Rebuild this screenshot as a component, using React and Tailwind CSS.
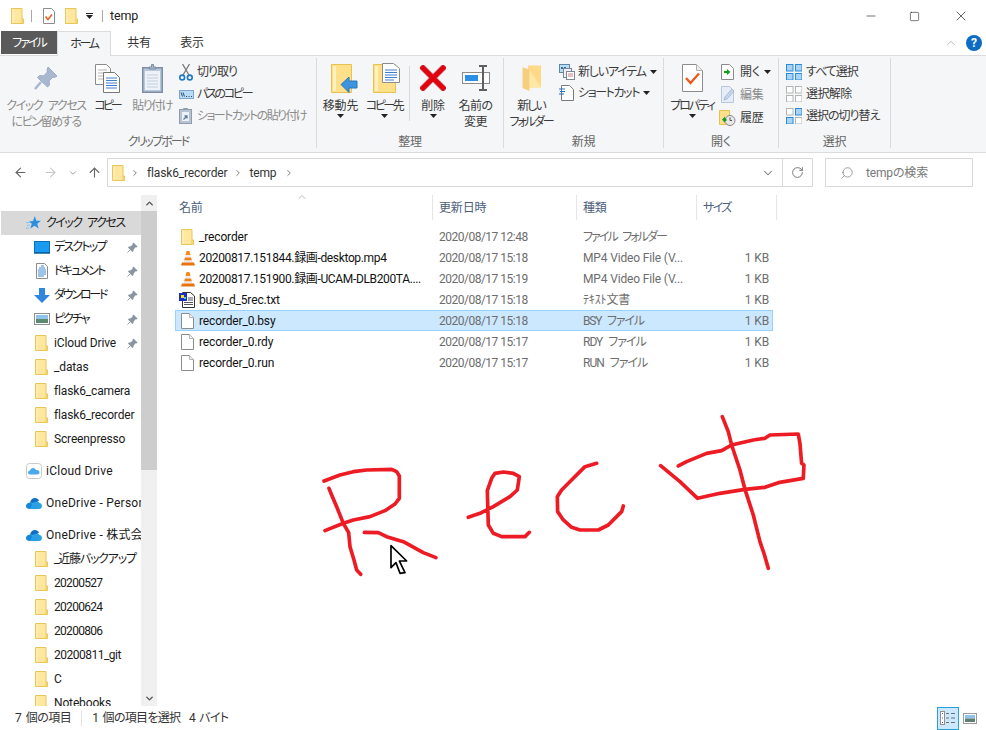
import React from 'react';
import { ArrowLeft, ArrowRight, ArrowUp, ChevronDown, ChevronRight, ChevronUp, RotateCw, Search, Minus, Square, X } from 'lucide-react';

const Caret = ({ className = '' }) => (
  <svg width="7" height="4" viewBox="0 0 7 4" className={className}>
    <path d="M0 0h7L3.5 4z" fill="#222" />
  </svg>
);

const Folder = ({ className = '' }) => (
  <svg width="13" height="16" viewBox="0 0 13 16" className={`shrink-0 ${className}`}>
    <path d="M.5.5h10.5v10.5h1.5v4.5H.5z" fill="#ffe79f" stroke="#eac656" />
    <path d="M11 11v4.5" stroke="#eac656" />
    <path d="M1.5 1.5h1v13h-1z" fill="#fff2c8" />
  </svg>
);

const FileIcon = ({ className = '' }) => (
  <svg width="13" height="16" viewBox="0 0 13 16" className={`shrink-0 ${className}`}>
    <path d="M.5.5h8l4 4v11H.5z" fill="#fff" stroke="#8c8c8c" />
    <path d="M8.5.5v4h4" fill="#f0f0f0" stroke="#b5b5b5" />
  </svg>
);

const VlcIcon = () => (
  <svg width="14" height="16" viewBox="0 0 14 16" className="shrink-0">
    <path d="M5.5 1h3l1 4h-5z" fill="#f58a1f" />
    <path d="M4.5 5h5l.6 2.5H3.9z" fill="#eee" />
    <path d="M3.9 7.5h6.2l.8 3H3.1z" fill="#f0811a" />
    <path d="M3.1 10.5h7.8l.4 2H2.7z" fill="#e9e9e9" />
    <path d="M1 12.5h12l1 3H0z" fill="#e9720c" />
  </svg>
);

const TxtIcon = () => (
  <svg width="16" height="16" viewBox="0 0 16 16" className="shrink-0 -ml-[2px]">
    <path d="M3.5.5h8l4 3.5v11.5h-12z" fill="#fff" stroke="#333" />
    <path d="M9 6h5M9 8h5M5 10.5h9M5 12.5h9" stroke="#555" />
    <rect x="0" y="1" width="8" height="8" fill="#1a2fc4" />
    <rect x="2" y="3" width="3" height="3" fill="#f5e31a" />
    <rect x="5" y="5" width="2" height="2" fill="#4bd0e8" />
  </svg>
);

const PinSmall = () => (
  <svg width="11" height="11" viewBox="0 0 12 12" className="shrink-0">
    <path d="M7 .5l4.5 4.5-1.2 1-.8-.3L7.4 7.8l-.3 2L5.9 11 1 6.1 2.2 4.9l2-.3 2.1-2.1-.3-.8z" fill="#8a95a3" />
    <path d="M3.5 8.5L.5 11.5" stroke="#8a95a3" />
  </svg>
);

const QuickStar = () => (
  <svg width="15" height="14" viewBox="0 0 16 15" className="shrink-0">
    <path d="M9.5 0l1.500 5 5 .2-4 3.100 1.500 5.200-4.300-3L4.500 13.500l1.700-5.100-3-2.400 4.300-.7z" fill="#2b8fe0" />
    <path d="M0 7h4M1 10h3M0 13h3" stroke="#7cbcf0" />
  </svg>
);

const DesktopIcon = () => (
  <svg width="16" height="13" viewBox="0 0 16 13" className="shrink-0">
    <rect x=".5" y=".5" width="15" height="11" fill="#1a9bf0" stroke="#0b6fc0" />
    <path d="M0 12h16" stroke="#0a5c9e" strokeWidth="1.5" />
  </svg>
);

const DocsIcon = () => (
  <svg width="12" height="16" viewBox="0 0 12 16" className="shrink-0">
    <path d="M.5.5h8l3 3v12H.5z" fill="#fff" stroke="#8c8c8c" />
    <path d="M5 3h3M3 5h6M2 7h8M2 9h8M2 11h8M2 13h6" stroke="#3c8ad0" />
  </svg>
);

const DownloadIcon = () => (
  <svg width="16" height="15" viewBox="0 0 16 15" className="shrink-0">
    <path d="M5 0h6v7h5l-8 8-8-8h5z" fill="#2f86dc" />
  </svg>
);

const PicturesIcon = () => (
  <svg width="16" height="12" viewBox="0 0 16 12" className="shrink-0">
    <rect x=".5" y=".5" width="15" height="11" fill="#fff" stroke="#8f8f8f" />
    <rect x="2" y="2" width="12" height="4" fill="#8cc4ec" />
    <rect x="2" y="6" width="12" height="4" fill="#5e8a72" />
  </svg>
);

const OneDriveIcon = () => (
  <svg width="16" height="11" viewBox="0 0 16 11" className="shrink-0">
    <path d="M4 4.500C4.500 2 6.500 0 9 0c1.800 0 3.200 1 4 2.500L9 6z" fill="#0f6fc4" />
    <path d="M3.500 11C1.500 11 0 9.800 0 8c0-1.800 1.500-3.300 3.700-3.500L8 6l2 5z" fill="#1487d8" />
    <path d="M6 6.500c.8-1.800 2.600-3 4.500-3 1.500 0 2.500.6 3 1.500 1.500.2 2.500 1.500 2.500 3s-1 3-3 3H4z" fill="#2a9fe6" />
  </svg>
);

const ICloudIcon = () => (
  <svg width="16" height="16" viewBox="0 0 16 16" className="shrink-0">
    <rect x=".5" y=".5" width="15" height="15" rx="3" fill="#fff" stroke="#c9c9c9" />
    <path d="M4 11.500C2.800 11.500 2 10.600 2 9.500 2 8.400 2.900 7.600 4 7.600 4.300 6 5.500 5 7 5c1.500 0 2.500.8 3 2 .3-.1.600-.1.900-.1 1.500 0 2.600 1 2.600 2.300 0 1.300-1.100 2.300-2.500 2.300z" fill="#4aa8ec" />
  </svg>
);

const PinLarge = () => (
  <svg width="24" height="25" viewBox="0 0 24 25">
    <path d="M14 1l9 9-2.500 1.500-1.500-.5-4 4 .5 4-2 2L3.500 11.500l2-2 4 .5 4-4-.5-1.500z" fill="#a9b8cf" stroke="#9aabc4" />
    <path d="M7 16L1 23" stroke="#a9b8cf" strokeWidth="2.500" />
  </svg>
);

const CopyLarge = () => (
  <svg width="25" height="29" viewBox="0 0 25 29">
    <path d="M.5.5h11l4 4v16H.5z" fill="#fff" stroke="#8c8c8c" />
    <path d="M3 6h9M3 9h9M3 12h9M3 15h9" stroke="#b5b5b5" />
    <path d="M8.5 8.5h11l5 5v15h-16z" fill="#fff" stroke="#777" />
    <path d="M11 14h11M11 16.500h11M11 19h11M11 21.500h11M11 24h11" stroke="#3f7fd0" />
  </svg>
);

const PasteLarge = () => (
  <svg width="21" height="29" viewBox="0 0 21 29">
    <rect x=".75" y="3.75" width="19.5" height="24.5" fill="#b8c8dc" stroke="#7d8da4" strokeWidth="1.5" />
    <rect x="3" y="7" width="15" height="19" fill="#eef2f8" />
    <path d="M5 11h11M5 14h11M5 17h11M5 20h11M5 23h11" stroke="#c3cedd" />
    <path d="M7 5V3h2.500V.5h2V3H14v2z" fill="#aab6c6" stroke="#7d8da4" />
  </svg>
);

const ScissorsIcon = () => (
  <svg width="14" height="17" viewBox="0 0 14 17">
    <path d="M4 11L10.500 0M10 11L3.500 0" stroke="#7a7a7a" strokeWidth="1.3" fill="none" />
    <circle cx="3.2" cy="13.5" r="2.4" fill="none" stroke="#1f78c8" strokeWidth="1.6" />
    <circle cx="10.8" cy="13.5" r="2.4" fill="none" stroke="#1f78c8" strokeWidth="1.6" />
  </svg>
);

const PathCopyIcon = () => (
  <svg width="15" height="9" viewBox="0 0 15 9">
    <rect x=".5" y=".5" width="14" height="8" fill="#b8dcf5" stroke="#7fa9cc" />
    <path d="M2 2.500l1.500 4M4 2.500l1.500 4M7 6.500h1M9.500 6.500h1M12 6.500h1" stroke="#334a66" />
  </svg>
);

const ShortcutPasteIcon = () => (
  <svg width="13" height="16" viewBox="0 0 13 16">
    <rect x=".5" y="1.5" width="12" height="14" fill="#b8c3d2" stroke="#8f9cad" />
    <rect x="3" y="4" width="7" height="9" fill="#eef1f6" />
    <path d="M4.500 1.500V.5h4v1" stroke="#8f9cad" fill="none" />
    <path d="M4.500 11.500l3-3M5.500 8h2.500v2.500" stroke="#5f7d9e" strokeWidth="1.3" fill="none" />
  </svg>
);

const MoveLarge = () => (
  <svg width="27" height="29" viewBox="0 0 27 29" className="translate-x-[4px]">
    <path d="M.5.5h20v28H.5z" fill="#ffe08a" stroke="#e8c14e" />
    <path d="M2 2h3v25H2z" fill="#fff0bd" />
    <path d="M10 20.500L18 13v4h8v7h-8v4.500z" fill="#3d93dd" stroke="#2a76bc" />
  </svg>
);

const CopyToLarge = () => (
  <svg width="27" height="30" viewBox="0 0 27 30" className="translate-x-[2px]">
    <path d="M.5 1.500h22v28H.5z" fill="#ffe08a" stroke="#e8c14e" />
    <path d="M2 3h3v25H2z" fill="#fff0bd" />
    <path d="M9.500.5h11l6 5v14h-17z" fill="#fff" stroke="#8c8c8c" />
    <path d="M12 7h12M12 9.500h12M12 12h12M12 14.500h12M12 17h9" stroke="#3f7fd0" />
  </svg>
);

const DeleteLarge = () => (
  <svg width="26" height="26" viewBox="0 0 26 26">
    <path d="M3 3l20 20M23 3L3 23" stroke="#8c3a3f" strokeWidth="6.5" strokeLinecap="square" opacity=".45" />
    <path d="M3 3l20 20M23 3L3 23" stroke="#e3000f" strokeWidth="5" strokeLinecap="square" />
  </svg>
);

const RenameLarge = () => (
  <svg width="28" height="26" viewBox="0 0 28 26">
    <rect x=".5" y="7.5" width="27" height="11" fill="#fff" stroke="#8c8c8c" />
    <rect x="3" y="10" width="13" height="6" fill="#2b8fe6" />
    <path d="M17 1h8M21 1v24M17 25h8" stroke="#5f5f5f" strokeWidth="2" fill="none" />
  </svg>
);

const NewFolderLarge = () => (
  <svg width="19" height="27" viewBox="0 0 19 27">
    <path d="M6 .5h13v22H6z" fill="#ffd987" />
    <path d="M.5 2l7 3v21l-7-3z" fill="#f6cf7e" />
    <path d="M7.500 5L19 22.500H7.500z" fill="#ffe7a8" />
  </svg>
);

const NewItemIcon = () => (
  <svg width="16" height="16" viewBox="0 0 16 16">
    <rect x=".5" y=".5" width="10" height="8" fill="#b8dcf5" stroke="#5d86a8" />
    <path d="M2 3h2v2H2zM5 3h2v2H5z" fill="#3a6c96" />
    <rect x="4.5" y="4.5" width="8" height="9" fill="#eef2f8" stroke="#7a8795" />
    <rect x="7.5" y="7.5" width="8" height="8" fill="#fff" stroke="#7a8795" />
    <path d="M9 10h5M9 12h5" stroke="#d07a7a" />
  </svg>
);

const ShortcutDocIcon = () => (
  <svg width="15" height="16" viewBox="0 0 15 16">
    <path d="M2.500.5h8l4 4v11h-12z" fill="#fff" stroke="#7c7c7c" />
    <path d="M0 4h6M1 6.500h5M0 9h5" stroke="#1f72c4" strokeWidth="1.2" />
  </svg>
);

const PropertiesLarge = () => (
  <svg width="21" height="28" viewBox="0 0 21 28">
    <path d="M.5.5h14l6 6v21H.5z" fill="#fff" stroke="#8c8c8c" />
    <path d="M14.500.5v6h6" fill="#eee" stroke="#b0b0b0" />
    <path d="M4 14l4.500 5L17 9.500" stroke="#ee5a1c" strokeWidth="2.4" fill="none" />
  </svg>
);

const OpenIcon = () => (
  <svg width="13" height="16" viewBox="0 0 13 16">
    <path d="M.5.5h8l4 4v11H.5z" fill="#fff" stroke="#8c8c8c" />
    <path d="M3 7h3V5l3.500 3L6 11V9H3z" fill="#12a012" />
  </svg>
);

const EditIcon = () => (
  <svg width="14" height="17" viewBox="0 0 14 17">
    <path d="M.5.5h8l4 4v12H.5z" fill="#e6edf7" stroke="#b7c6dc" />
    <path d="M3 14l1-3 7-8 2 2-7 8z" fill="#c8d6ea" stroke="#a8bbd6" />
  </svg>
);

const HistoryIcon = () => (
  <svg width="17" height="16" viewBox="0 0 17 16" className="-ml-[2px]">
    <path d="M.5.5h10v14H.5z" fill="#ffe08a" stroke="#e8c14e" />
    <circle cx="11" cy="10.5" r="5" fill="#e8e8e8" stroke="#8a8a8a" />
    <path d="M11 7.500v3h2" stroke="#555" fill="none" />
    <path d="M3 9.500l3-3v2h1.500v2.500H6v2z" fill="#1f9a2a" />
  </svg>
);

// order: top left, top right, bottom left, bottom right. true = blue tile, false = grey outline
const SelectGrid = ({ on }) => (
  <svg width="16" height="16" viewBox="0 0 16 16">
    {[[0, 0], [9, 0], [0, 9], [9, 9]].map(([x, y], idx) => (
      <rect
        key={idx}
        x={x + 0.5}
        y={y + 0.5}
        width="6.5"
        height="6.5"
        fill={on[idx] ? '#a9d2f3' : '#fff'}
        stroke={on[idx] ? '#2a8bdc' : '#b4b4b4'}
      />
    ))}
  </svg>
);

const LargeButton = ({ icon, lines, arrow, muted, className = '', labelClass = '' }) => (
  <div className={`flex flex-col items-center shrink-0 ${className}`}>
    <div className="h-[40px] flex items-center justify-center">{icon}</div>
    {lines.map((line) => (
      <div key={line} className={`leading-[16px] whitespace-nowrap ${labelClass} ${muted ? 'text-[#8b8b8b]' : 'text-[#3a3a3a]'}`}>{line}</div>
    ))}
    {arrow && <Caret />}
  </div>
);

const SmallRow = ({ icon, label, muted, caret, iconBox = 'w-[19px]', rowH = 'h-[22px]', labelClass = '' }) => (
  <div className={`flex items-center whitespace-nowrap ${rowH} ${muted ? 'text-[#8b8b8b]' : 'text-[#3a3a3a]'}`}>
    <div className={`flex items-center shrink-0 ${iconBox}`}>{icon}</div>
    <span className={labelClass}>{label}</span>
    {caret && <Caret className="ml-[4px]" />}
  </div>
);

const RibbonGroup = ({ label, className = '', labelClass = '', children }) => (
  <div className={`flex flex-col h-[90px] mt-[2px] border-r border-[#dadbdc] shrink-0 ${className}`}>
    <div className="flex flex-1 min-h-0">{children}</div>
    <div className={`h-[18px] pt-[3px] leading-[18px] text-center text-[#666] ${labelClass}`}>{label}</div>
  </div>
);

const navQuick = [
  { name: 'デスクトップ', icon: <DesktopIcon />, cls: 'tracking-[-1.8px]' },
  { name: 'ドキュメント', icon: <DocsIcon />, cls: 'tracking-[-1.8px]' },
  { name: 'ダウンロード', icon: <DownloadIcon />, cls: 'tracking-[-2.2px]' },
  { name: 'ピクチャ', icon: <PicturesIcon />, cls: 'tracking-[-2px]' },
  { name: 'iCloud Drive', icon: <Folder /> }
];
const navFolders = ['_datas', 'flask6_camera', 'flask6_recorder', 'Screenpresso'];
const navDrive = [
  { name: '_近藤バックアップ', cls: 'tracking-[-1.2px]' },
  { name: '20200527', cls: 'tracking-[-0.7px]' },
  { name: '20200624', cls: 'tracking-[-0.7px]' },
  { name: '20200806', cls: 'tracking-[-0.7px]' },
  { name: '20200811_git', cls: 'tracking-[-0.5px]' },
  { name: 'C' },
  { name: 'Notebooks' }
];

const NavRow = ({ icon, name, pinned, cls = '' }) => (
  <div className="h-[24px] flex items-center pr-[3px]">
    <div className="w-[53px] pl-[28px] flex justify-center shrink-0">{icon}</div>
    <span className={`whitespace-nowrap text-[#1a1a1a] ${cls}`}>{name}</span>
    {pinned && <span className="ml-auto"><PinSmall /></span>}
  </div>
);

const NavRoot = ({ icon, name, className = '' }) => (
  <div className={`h-[24px] flex items-center ${className}`}>
    <div className="w-[45px] pl-[20px] flex justify-center shrink-0">{icon}</div>
    <span className="whitespace-nowrap text-[#1a1a1a] tracking-[0.25px]">{name}</span>
  </div>
);

const files = [
  { name: '_recorder', date: '2020/08/17 12:48', type: 'ファイル フォルダー', typeCls: 'tracking-[-1.9px] [word-spacing:4px]', size: '', icon: <Folder /> },
  { name: '20200817.151844.録画-desktop.mp4', nameCls: 'tracking-[-0.35px]', date: '2020/08/17 15:18', type: 'MP4 Video File (V...', size: '1 KB', icon: <VlcIcon /> },
  { name: '20200817.151900.録画-UCAM-DLB200TA....', nameCls: 'tracking-[-0.35px]', date: '2020/08/17 15:19', type: 'MP4 Video File (V...', size: '1 KB', icon: <VlcIcon /> },
  { name: 'busy_d_5rec.txt', date: '2020/08/17 15:18', type: 'ﾃｷｽﾄ文書', size: '1 KB', icon: <TxtIcon /> },
  { name: 'recorder_0.bsy', date: '2020/08/17 15:18', type: 'BSY ファイル', typeCls: 'tracking-[-1.2px] [word-spacing:4px]', size: '1 KB', icon: <FileIcon />, selected: true },
  { name: 'recorder_0.rdy', date: '2020/08/17 15:17', type: 'RDY ファイル', typeCls: 'tracking-[-1px] [word-spacing:4px]', size: '1 KB', icon: <FileIcon /> },
  { name: 'recorder_0.run', date: '2020/08/17 15:17', type: 'RUN ファイル', typeCls: 'tracking-[-1px] [word-spacing:4px]', size: '1 KB', icon: <FileIcon /> }
];

const App = () => {
  return (
    <div className="relative w-[986px] h-[730px] overflow-hidden bg-white flex flex-col text-[12px] tracking-[-0.15px] text-[#222] [font-family:Roboto,'Noto_Sans_CJK_JP',sans-serif] [font-feature-settings:'palt']">
      {/* Title bar */}
      <div className="h-[31px] pt-[1px] flex items-center shrink-0">
        <Folder className="ml-[11px]" />
        <div className="ml-[7px] w-px h-[12px] bg-[#aaa]" />
        <svg width="12" height="16" viewBox="0 0 12 16" className="ml-[11px]">
          <path d="M.5.5h8l3 3v12H.5z" fill="#fff" stroke="#8c8c8c" />
          <path d="M2.500 8.500l2.500 3 4-5" stroke="#ee5a1c" strokeWidth="1.5" fill="none" />
        </svg>
        <Folder className="ml-[10px]" />
        <div className="ml-[8px] flex flex-col items-center gap-[1px]">
          <div className="w-[7px] h-px bg-[#222]" />
          <Caret />
        </div>
        <div className="ml-[9px] w-px h-[12px] bg-[#aaa]" />
        <span className="ml-[7px] text-[#222] text-[12.5px]">temp</span>
        <Minus size={14} strokeWidth={1} className="ml-auto text-[#111]" />
        <Square size={11} strokeWidth={1.2} className="ml-[31px] text-[#111]" />
        <X size={16} strokeWidth={1} className="ml-[33px] mr-[17px] text-[#111]" />
      </div>

      {/* Tabs */}
      <div className="h-[25px] flex items-stretch border-b border-[#dadbdc] shrink-0">
        <div className="ml-[1px] w-[56px] h-[23px] bg-[#5a5a5a] text-white flex items-center justify-center tracking-[-2px]">ファイル</div>
        <div className="w-[54px] h-[25px] bg-[#f5f6f7] border border-b-0 border-[#dadbdc] flex items-center justify-center text-[#333] tracking-[-2.3px]">ホーム</div>
        <div className="w-[56px] flex items-center justify-center text-[#333]">共有</div>
        <div className="w-[50px] flex items-center justify-center text-[#333]">表示</div>
        <ChevronUp size={14} strokeWidth={1.2} className="ml-auto self-center text-[#9a9a9a]" />
        <div className="ml-[8px] mr-[4px] self-center w-[16px] h-[16px] rounded-full bg-[#0b6cc4] text-white font-bold text-[12px] flex items-center justify-center">?</div>
      </div>

      {/* Ribbon */}
      <div className="h-[97px] bg-[#f5f6f7] border-b border-[#dadbdc] flex shrink-0">
        <RibbonGroup label="クリップボード" labelClass="tracking-[-1.9px]" className="w-[317px]">
          <LargeButton className="ml-[6px] w-[80px]" labelClass="tracking-[-1.4px] [word-spacing:4px]" icon={<PinLarge />} lines={['クイック アクセス', 'にピン留めする']} muted />
          <LargeButton className="ml-[2px] w-[38px]" labelClass="tracking-[-3px]" icon={<CopyLarge />} lines={['コピー']} />
          <LargeButton className="ml-[2px] w-[48px]" labelClass="tracking-[-1.5px]" icon={<PasteLarge />} lines={['貼り付け']} muted />
          <div className="ml-[3px] pt-[3px]">
            <SmallRow iconBox="w-[18px]" labelClass="tracking-[-1px]" icon={<ScissorsIcon />} label="切り取り" />
            <SmallRow iconBox="w-[18px]" labelClass="tracking-[-2.3px]" icon={<PathCopyIcon />} label="パスのコピー" />
            <SmallRow iconBox="w-[18px]" labelClass="tracking-[-1.6px]" icon={<ShortcutPasteIcon />} label="ショートカットの貼り付け" muted />
          </div>
        </RibbonGroup>

        <RibbonGroup label="整理" className="w-[187px]">
          <LargeButton className="ml-[2px] w-[43px]" icon={<MoveLarge />} lines={['移動先']} arrow />
          <LargeButton className="w-[44px]" labelClass="tracking-[-2.5px]" icon={<CopyToLarge />} lines={['コピー先']} arrow />
          <div className="ml-[3px] mt-[8px] w-px h-[55px] bg-[#dadbdc]" />
          <LargeButton className="ml-[2px] w-[42px]" icon={<DeleteLarge />} lines={['削除']} arrow />
          <LargeButton className="w-[43px]" labelClass="tracking-[-0.5px]" icon={<RenameLarge />} lines={['名前の', '変更']} />
        </RibbonGroup>

        <RibbonGroup label="新規" className="w-[160px]">
          <LargeButton className="ml-[1px] w-[52px]" labelClass="tracking-[-2px]" icon={<NewFolderLarge />} lines={['新しい', 'フォルダー']} />
          <div className="ml-[2px] pt-[3px]">
            <SmallRow labelClass="tracking-[-1.2px]" icon={<NewItemIcon />} label="新しいアイテム" caret rowH="h-[21px]" />
            <SmallRow labelClass="tracking-[-1.4px]" icon={<ShortcutDocIcon />} label="ショートカット" caret rowH="h-[21px]" />
          </div>
        </RibbonGroup>

        <RibbonGroup label="開く" className="w-[115px]">
          <LargeButton className="ml-[3px] w-[50px]" labelClass="tracking-[-2px]" icon={<PropertiesLarge />} lines={['プロパティ']} arrow />
          <div className="ml-[4px] pt-[2px]">
            <SmallRow rowH="h-[23px]" icon={<OpenIcon />} label="開く" caret />
            <SmallRow rowH="h-[23px]" icon={<EditIcon />} label="編集" muted />
            <SmallRow rowH="h-[23px]" icon={<HistoryIcon />} label="履歴" />
          </div>
        </RibbonGroup>

        <RibbonGroup label="選択" className="w-[112px]">
          <div className="ml-[7px] pt-[3px]">
            <SmallRow iconBox="w-[20px]" labelClass="tracking-[-1px]" icon={<SelectGrid on={[true, true, true, true]} />} label="すべて選択" />
            <SmallRow iconBox="w-[20px]" labelClass="tracking-[-0.6px]" icon={<SelectGrid on={[false, false, false, false]} />} label="選択解除" />
            <SmallRow iconBox="w-[20px]" labelClass="tracking-[-1px]" icon={<SelectGrid on={[false, true, true, false]} />} label="選択の切り替え" />
          </div>
        </RibbonGroup>
      </div>

      {/* Address row */}
      <div className="h-[37px] pt-[5px] flex items-start shrink-0">
        <div className="w-[107px] h-[29px] flex items-center shrink-0">
          <ArrowLeft size={15} strokeWidth={1.8} className="ml-[13px] text-[#666]" />
          <ArrowRight size={15} strokeWidth={1.8} className="ml-[15px] text-[#c8c8c8]" />
          <ChevronDown size={10} strokeWidth={2} className="ml-[10px] text-[#8a8a8a]" />
          <ArrowUp size={15} strokeWidth={1.8} className="ml-[9px] text-[#666]" />
        </div>
        <div className="w-[706px] h-[29px] border border-[#d9d9d9] flex items-center shrink-0">
          <Folder className="ml-[4px]" />
          <ChevronRight size={10} strokeWidth={2} className="ml-[5px] text-[#666]" />
          <span className="ml-[7px] text-[#333]">flask6_recorder</span>
          <ChevronRight size={10} strokeWidth={2} className="ml-[6px] text-[#666]" />
          <span className="ml-[6px] text-[#333]">temp</span>
          <ChevronRight size={10} strokeWidth={2} className="ml-[8px] text-[#666]" />
          <ChevronDown size={14} strokeWidth={1.8} className="ml-auto mr-[7px] text-[#777]" />
          <div className="w-[30px] h-full border-l border-[#d9d9d9] flex items-center justify-center">
            <RotateCw size={13} strokeWidth={1.8} className="text-[#777]" />
          </div>
        </div>
        <div className="ml-[12px] w-[148px] h-[29px] border border-[#d9d9d9] flex items-center">
          <Search size={14} strokeWidth={1.2} className="ml-[14px] -scale-x-100 text-[#777]" />
          <span className="ml-[12px] text-[#777]">tempの検索</span>
        </div>
      </div>

      {/* Main */}
      <div className="h-[516px] flex shrink-0 overflow-hidden">
        <div className="w-[157px] flex shrink-0">
          <div className="w-[141px] pl-[1px] pt-[21px] overflow-hidden">
            <div className="h-[24px] bg-[#d9d9d9] flex items-center">
              <div className="w-[45px] pl-[20px] flex justify-center shrink-0"><QuickStar /></div>
              <span className="whitespace-nowrap text-[#1a1a1a] tracking-[-1.5px] [word-spacing:4px]">クイック アクセス</span>
            </div>
            {navQuick.map((item) => <NavRow key={item.name} icon={item.icon} name={item.name} cls={item.cls} pinned />)}
            {navFolders.map((name) => <NavRow key={name} icon={<Folder />} name={name} />)}
            <NavRoot className="mt-[8px]" icon={<ICloudIcon />} name="iCloud Drive" />
            <NavRoot className="mt-[8px]" icon={<OneDriveIcon />} name="OneDrive - Personal" />
            <NavRoot className="mt-[8px]" icon={<OneDriveIcon />} name="OneDrive - 株式会社" />
            {navDrive.map((item) => <NavRow key={item.name} icon={<Folder />} name={item.name} cls={item.cls} />)}
          </div>
          <div className="w-[16px] mt-[5px] bg-[#f0f0f0] flex flex-col">
            <div className="h-[16px] flex items-center justify-center">
              <ChevronUp size={11} strokeWidth={3} className="text-[#505050]" />
            </div>
            <div className="h-[259px] bg-[#cdcdcd]" />
            <div className="mt-auto h-[16px] flex items-center justify-center">
              <ChevronDown size={11} strokeWidth={3} className="text-[#505050]" />
            </div>
          </div>
        </div>

        <div className="flex-1 min-w-0">
          <div className="relative mt-[5px] ml-[15px] h-[25px] flex text-[#4c607a]">
            <div className="w-[261px] pl-[7px] pt-[4px] border-r border-[#e5e5e5]">名前</div>
            <ChevronUp size={12} strokeWidth={1} className="absolute left-[124px] top-[-4px] text-[#777]" />
            <div className="w-[144px] pl-[6px] pt-[4px] border-r border-[#e5e5e5]">更新日時</div>
            <div className="w-[120px] pl-[6px] pt-[4px] border-r border-[#e5e5e5]">種類</div>
            <div className="w-[80px] pl-[6px] pt-[4px] border-r border-[#e5e5e5] tracking-[-1.7px]">サイズ</div>
          </div>
          <div className="mt-[6px] ml-[18px] w-[598px]">
            {files.map((file) => (
              <div
                key={file.name}
                className={`h-[21px] flex items-center border ${file.selected ? 'bg-[#cce8ff] border-[#99d1ff]' : 'border-transparent'}`}
              >
                <div className="w-[263px] pl-[5px] flex items-center shrink-0">
                  <div className="w-[18px] flex items-center shrink-0">{file.icon}</div>
                  <span className={`whitespace-nowrap text-[#111] ${file.nameCls || ''}`}>{file.name}</span>
                </div>
                <div className="w-[144px] shrink-0 text-[#6d6d6d] tracking-[-0.5px]">{file.date}</div>
                <div className={`w-[120px] shrink-0 text-[#6d6d6d] whitespace-nowrap ${file.typeCls || ''}`}>{file.type}</div>
                <div className="w-[66px] shrink-0 text-right text-[#6d6d6d]">{file.size}</div>
              </div>
            ))}
          </div>
        </div>
      </div>

      {/* Status bar */}
      <div className="h-[24px] flex items-center bg-white text-[#333] shrink-0 relative">
        <span className="ml-[15px] tracking-[-0.5px] [word-spacing:2px]">7 個の項目</span>
        <div className="ml-[10px] w-px h-[16px] bg-[#e5e5e5]" />
        <span className="ml-[10px] tracking-[-0.7px] [word-spacing:2px]">1 個の項目を選択&nbsp;&nbsp;4 バイト</span>
        <div className="ml-auto w-[22px] h-[23px] bg-[#cce8ff] border border-[#26a0da] flex items-center justify-center">
          <svg width="16" height="14" viewBox="0 0 16 14">
            <rect x=".5" y=".5" width="4" height="13" fill="#fff" stroke="#8f8f8f" />
            <path d="M6 2.500h3M11 2.500h4M6 7h3M11 7h4M6 11.500h3M11 11.500h4" stroke="#6f6f6f" />
            <path d="M2 2h1v1H2zM2 6.500h1v1H2z" fill="#666" />
            <path d="M2 11h1v1H2z" fill="#b03030" />
          </svg>
        </div>
        <svg width="14" height="11" viewBox="0 0 14 11" className="ml-[4px] mr-[9px]">
          <rect x=".5" y=".5" width="13" height="10" fill="#fff" stroke="#9a9a9a" />
          <rect x="2" y="2" width="10" height="3.5" fill="#8cc4ec" />
          <rect x="2" y="5.5" width="10" height="3.5" fill="#5e7f72" />
        </svg>
      </div>

      {/* Red handwriting and mouse pointer over the list */}
      <svg viewBox="0 0 986 730" className="absolute inset-0 w-full h-full pointer-events-none">
        <g transform="translate(310 400) scale(0.3333)" fill="none" stroke="#ed1c24" strokeWidth="11" strokeLinejoin="round" strokeLinecap="round">
          <polyline points="42,243 90,225 130,215 170,210 245,208 260,215 268,228 268,295 255,312 225,332 180,350 130,360 100,370 45,392" />
          <polyline points="57,265 65,285 80,320 100,370 116,398 120,440 132,480 140,510 152,523" />
          <polyline points="163,397 205,398 230,410 280,425 340,458 378,473" />
          <polyline points="475,352 510,340 550,320 600,290 622,270 628,230 610,220 580,216 555,220 545,235 532,272 535,375 550,400 575,410 645,410 658,397" />
          <polyline points="860,190 825,200 790,235 755,270 742,290 743,335 760,360 785,382 810,390 865,390 895,375 920,350 935,335 940,318" />
          <polyline points="1105,198 1130,185 1190,160 1235,152 1265,135 1330,120 1365,115 1380,105 1465,102 1470,130 1475,190 1482,195 1480,235 1405,248 1365,262 1305,268 1230,280 1163,295 1110,245 1052,197" />
          <polyline points="1237,50 1255,95 1265,135 1290,210 1305,268 1330,345 1350,425 1362,460 1375,505" />
          <polygon points="243,437 290,483 268,483 285,518 270,520 258,488 243,503" fill="#fff" stroke="#000" strokeWidth="5" strokeLinecap="butt" />
        </g>
      </svg>
    </div>
  );
};

export default App;
